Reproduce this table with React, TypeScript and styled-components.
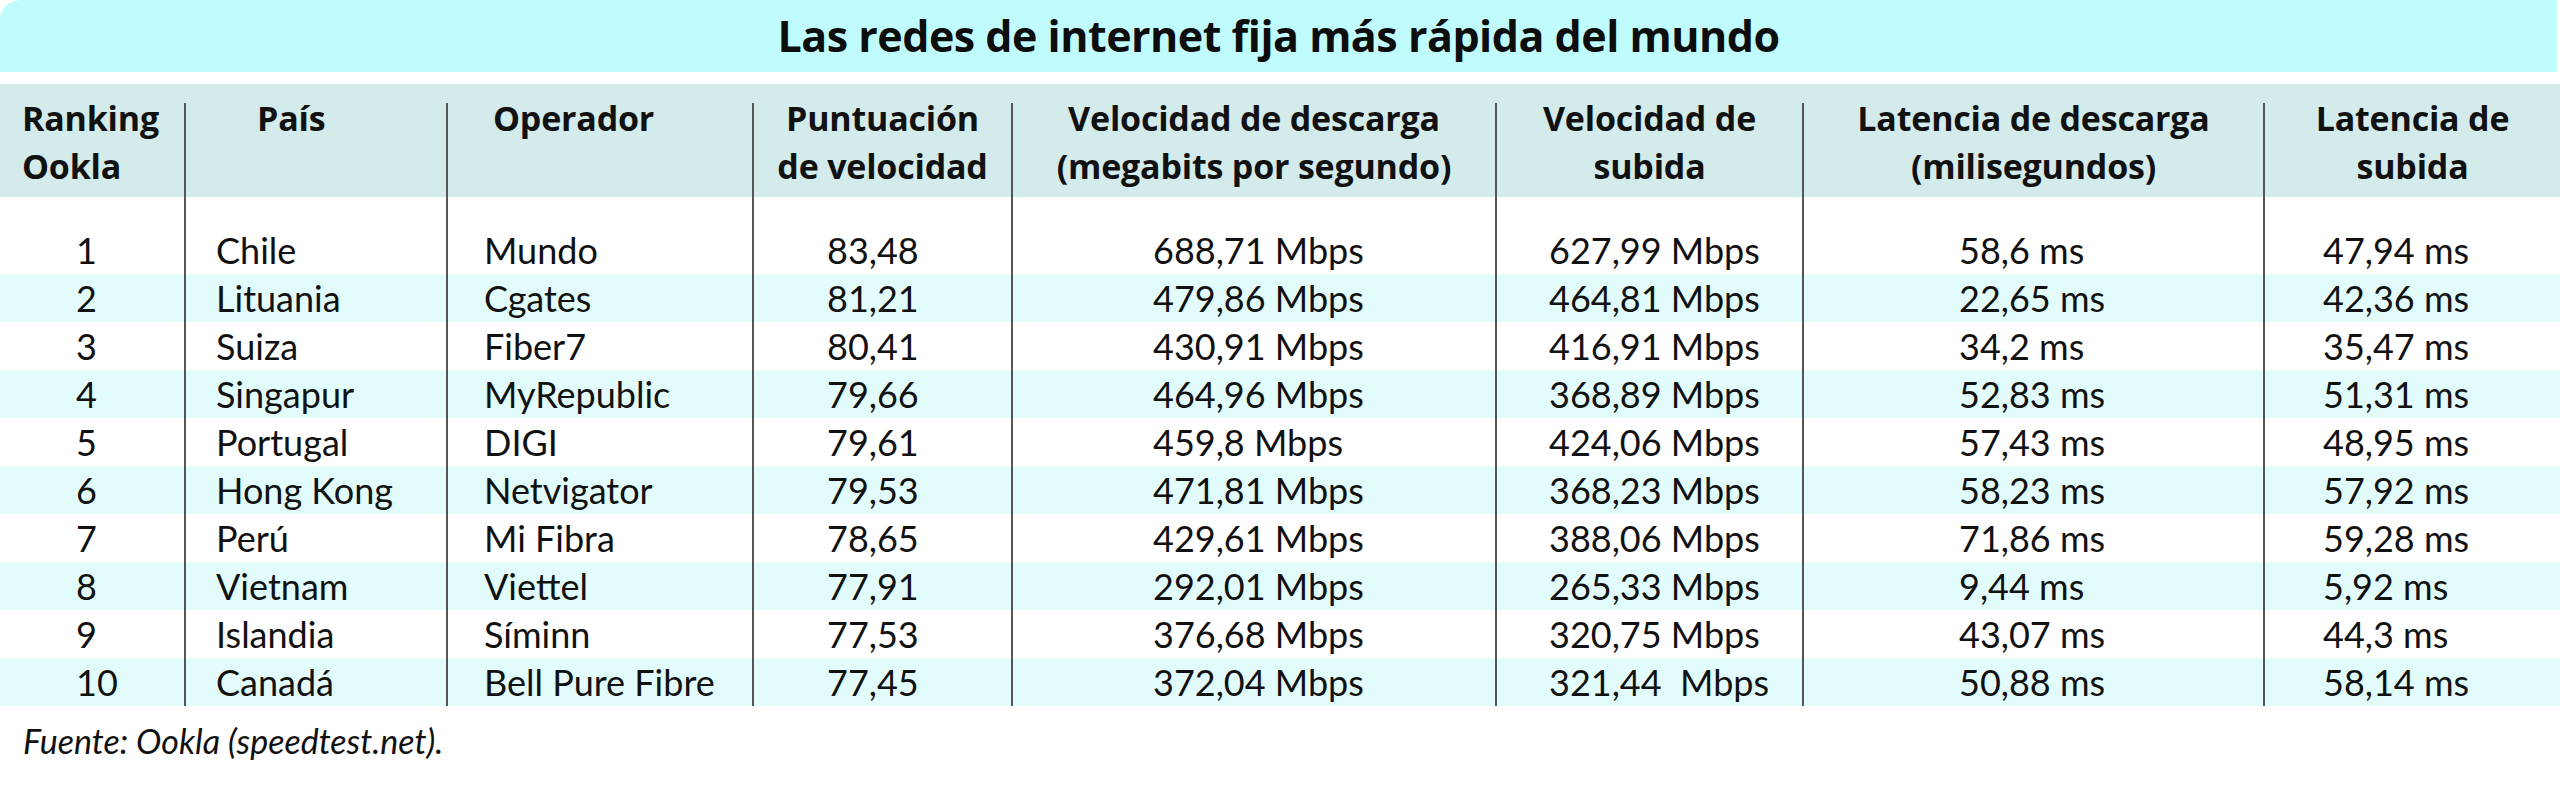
import React from 'react';
import styled, { createGlobalStyle } from 'styled-components';

const COLS = '184px 262px 306px 259px 484px 307px 461px 297px';

type Header = { lines: string[]; align: 'left' | 'center'; pad: number };

const headers: Header[] = [
  { lines: ['Ranking', 'Ookla'], align: 'left', pad: 22 },
  { lines: ['País'], align: 'left', pad: 71 },
  { lines: ['Operador'], align: 'left', pad: 45 },
  { lines: ['Puntuación', 'de velocidad'], align: 'center', pad: 0 },
  { lines: ['Velocidad de descarga', '(megabits por segundo)'], align: 'center', pad: 0 },
  { lines: ['Velocidad de', 'subida'], align: 'center', pad: 0 },
  { lines: ['Latencia de descarga', '(milisegundos)'], align: 'center', pad: 0 },
  { lines: ['Latencia de', 'subida'], align: 'center', pad: 0 },
];

// left padding of the body text in each column
const bodyPad = [76, 30, 36, 73, 140, 52, 155, 58];

const rows: string[][] = [
  ['1', 'Chile', 'Mundo', '83,48', '688,71 Mbps', '627,99 Mbps', '58,6 ms', '47,94 ms'],
  ['2', 'Lituania', 'Cgates', '81,21', '479,86 Mbps', '464,81 Mbps', '22,65 ms', '42,36 ms'],
  ['3', 'Suiza', 'Fiber7', '80,41', '430,91 Mbps', '416,91 Mbps', '34,2 ms', '35,47 ms'],
  ['4', 'Singapur', 'MyRepublic', '79,66', '464,96 Mbps', '368,89 Mbps', '52,83 ms', '51,31 ms'],
  ['5', 'Portugal', 'DIGI', '79,61', '459,8 Mbps', '424,06 Mbps', '57,43 ms', '48,95 ms'],
  ['6', 'Hong Kong', 'Netvigator', '79,53', '471,81 Mbps', '368,23 Mbps', '58,23 ms', '57,92 ms'],
  ['7', 'Perú', 'Mi Fibra', '78,65', '429,61 Mbps', '388,06 Mbps', '71,86 ms', '59,28 ms'],
  ['8', 'Vietnam', 'Viettel', '77,91', '292,01 Mbps', '265,33 Mbps', '9,44 ms', '5,92 ms'],
  ['9', 'Islandia', 'Síminn', '77,53', '376,68 Mbps', '320,75 Mbps', '43,07 ms', '44,3 ms'],
  ['10', 'Canadá', 'Bell Pure Fibre', '77,45', '372,04 Mbps', '321,44  Mbps', '50,88 ms', '58,14 ms'],
];

const App: React.FC = () => (
  <>
    <GlobalStyle />
    <Page>
      <TitleBar>
        <h1>Las redes de internet fija más rápida del mundo</h1>
      </TitleBar>

      <HeadRow>
        {headers.map((h, i) => (
          <HeadCell key={i} $first={i === 0} $align={h.align} $pad={h.pad}>
            <HeadLabel>
              {h.lines.map((l) => (
                <span key={l}>{l}</span>
              ))}
            </HeadLabel>
          </HeadCell>
        ))}
      </HeadRow>

      <Body>
        {rows.map((r, ri) => (
          <Row key={ri} $striped={ri % 2 === 1}>
            {r.map((v, ci) => (
              <Cell key={ci} $first={ci === 0} $pad={bodyPad[ci]}>
                {v}
              </Cell>
            ))}
          </Row>
        ))}
      </Body>

      <Source>Fuente: Ookla (speedtest.net).</Source>
    </Page>
  </>
);

export default App;

const GlobalStyle = createGlobalStyle`
  html, body {
    margin: 0;
    padding: 0;
    background: #ffffff;
  }
  body {
    font-family: Lato, "Liberation Sans", sans-serif;
    color: #111111;
  }
`;

const Page = styled.main`
  width: 2560px;
  height: 801px;
  overflow: hidden;
`;

const TitleBar = styled.header`
  height: 72px;
  margin-right: 3px;
  border-top-left-radius: 20px;
  background-color: #c0fcfd;
  display: flex;
  align-items: center;
  justify-content: center;
  h1 {
    margin: 0;
    font-family: "Open Sans", "Liberation Sans", sans-serif;
    font-size: 43px;
    line-height: 72px;
    font-weight: 700;
    letter-spacing: -0.5px;
    color: #0d0d0d;
  }
`;

const HeadRow = styled.div`
  margin-top: 12px;
  padding-top: 19px;
  height: 94px;
  display: grid;
  grid-template-columns: ${COLS};
  background-color: #d3ebeb;
`;

const HeadCell = styled.div<{ $first: boolean; $align: 'left' | 'center'; $pad: number }>`
  border-left: ${(p) => (p.$first ? 'none' : '2px solid #555555')};
  padding-left: ${(p) => p.$pad}px;
  text-align: ${(p) => p.$align};
  font-family: "Open Sans", "Liberation Sans", sans-serif;
  font-size: 34px;
  font-weight: 700;
  line-height: 48px;
  letter-spacing: -0.2px;
  white-space: nowrap;
`;

const HeadLabel = styled.div`
  margin-top: -9px;
  display: flex;
  flex-direction: column;
`;

const Body = styled.div`
  display: flex;
  flex-direction: column;
`;

const Row = styled.div<{ $striped: boolean }>`
  display: grid;
  grid-template-columns: ${COLS};
  background-color: ${(p) => (p.$striped ? '#e2fcfc' : '#ffffff')};
  &:first-child > div {
    padding-top: 29px;
  }
`;

const Cell = styled.div<{ $first: boolean; $pad: number }>`
  border-left: ${(p) => (p.$first ? 'none' : '2px solid #555555')};
  padding-left: ${(p) => p.$pad}px;
  font-size: 36px;
  line-height: 48px;
  white-space: pre;
`;

const Source = styled.p`
  margin: 15px 0 0 23px;
  font-size: 34px;
  font-style: italic;
  line-height: 1.2;
`;
